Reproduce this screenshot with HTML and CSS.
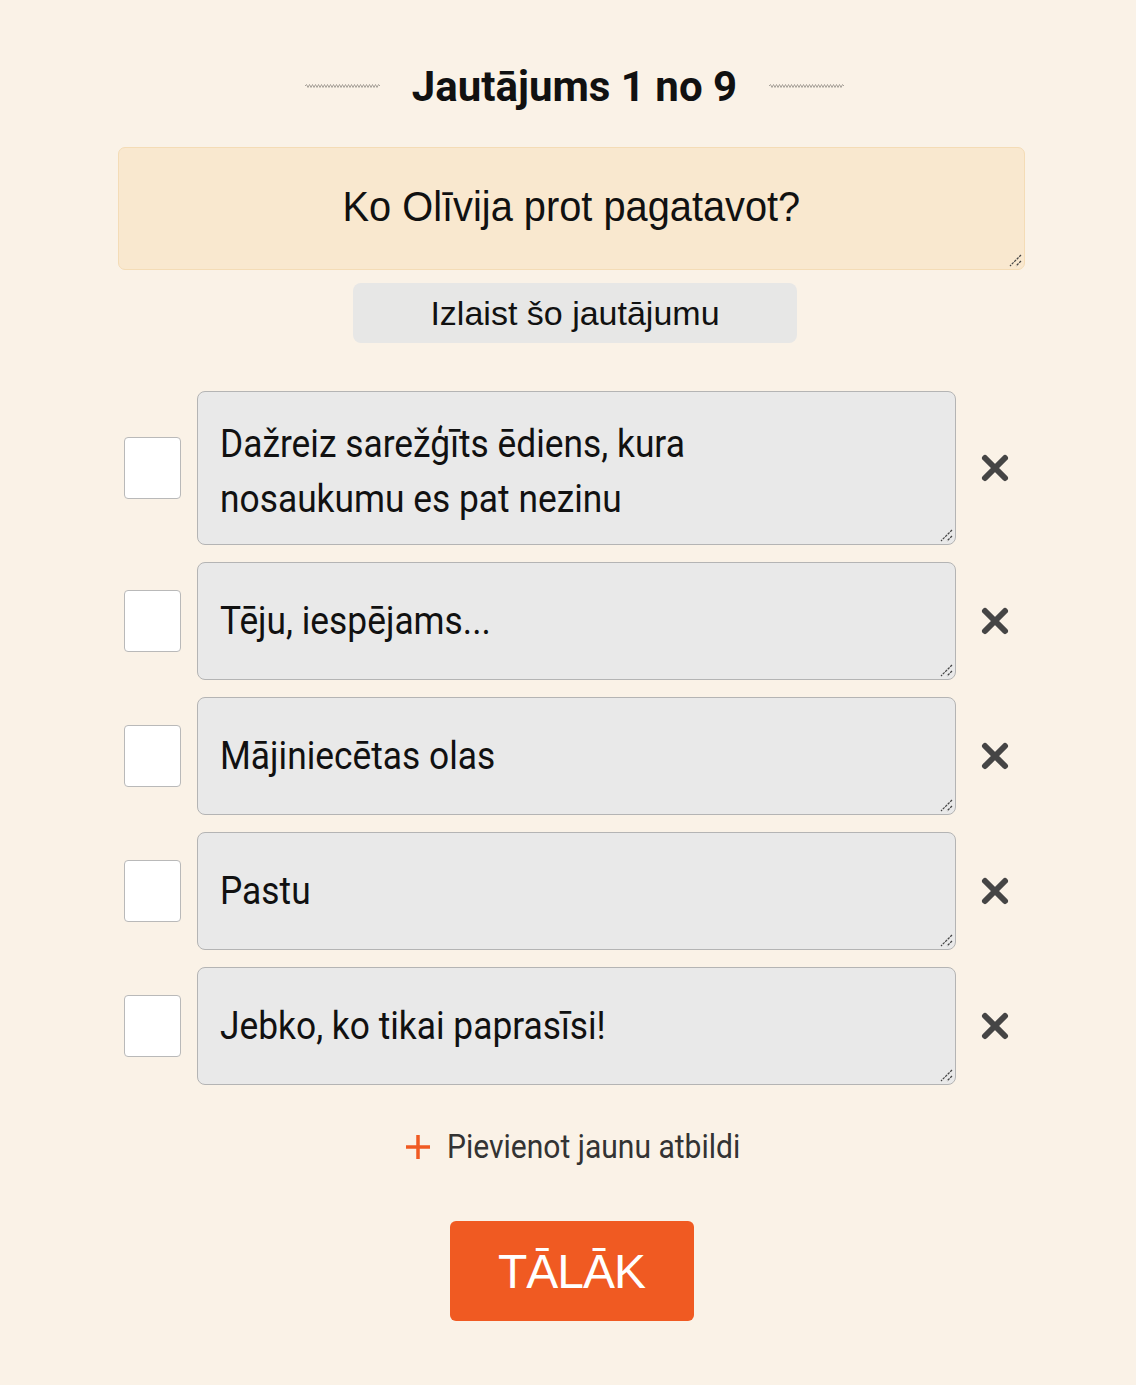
FILE: index.html
```html
<!DOCTYPE html>
<html lang="lv">
<head>
<meta charset="utf-8">
<title>Jautājums 1 no 9</title>
<link rel="stylesheet" href="styles.css">
</head>
<body>
<main class="page">
  <header class="title-row">
    <svg class="wave" width="75" height="6" viewBox="0 0 75 6"><polyline points="0,3 1.5,1.5 3,4.5 4.5,1.5 6,4.5 7.5,1.5 9,4.5 10.5,1.5 12,4.5 13.5,1.5 15,4.5 16.5,1.5 18,4.5 19.5,1.5 21,4.5 22.5,1.5 24,4.5 25.5,1.5 27,4.5 28.5,1.5 30,4.5 31.5,1.5 33,4.5 34.5,1.5 36,4.5 37.5,1.5 39,4.5 40.5,1.5 42,4.5 43.5,1.5 45,4.5 46.5,1.5 48,4.5 49.5,1.5 51,4.5 52.5,1.5 54,4.5 55.5,1.5 57,4.5 58.5,1.5 60,4.5 61.5,1.5 63,4.5 64.5,1.5 66,4.5 67.5,1.5 69,4.5 70.5,1.5 72,4.5 73.5,1.5 75,3"/></svg>
    <h1 class="title">Jautājums 1 no 9</h1>
    <svg class="wave" width="75" height="6" viewBox="0 0 75 6"><polyline points="0,3 1.5,1.5 3,4.5 4.5,1.5 6,4.5 7.5,1.5 9,4.5 10.5,1.5 12,4.5 13.5,1.5 15,4.5 16.5,1.5 18,4.5 19.5,1.5 21,4.5 22.5,1.5 24,4.5 25.5,1.5 27,4.5 28.5,1.5 30,4.5 31.5,1.5 33,4.5 34.5,1.5 36,4.5 37.5,1.5 39,4.5 40.5,1.5 42,4.5 43.5,1.5 45,4.5 46.5,1.5 48,4.5 49.5,1.5 51,4.5 52.5,1.5 54,4.5 55.5,1.5 57,4.5 58.5,1.5 60,4.5 61.5,1.5 63,4.5 64.5,1.5 66,4.5 67.5,1.5 69,4.5 70.5,1.5 72,4.5 73.5,1.5 75,3"/></svg>
  </header>

  <div class="question">
    <p class="question-text">Ko Olīvija prot pagatavot?</p>
    <svg class="grip" width="14" height="14" viewBox="0 0 14 14"><path d="M13 2 L2 13 M13 8 L8 13"/></svg>
  </div>

  <div class="skip-wrap"><button class="skip">Izlaist šo jautājumu</button></div>

  <ul class="answers">
    <li class="answer">
      <span class="check"></span>
      <div class="answer-box answer-box-multi"><span class="answer-text">Dažreiz sarežģīts ēdiens, kura<br>nosaukumu es pat nezinu</span>
        <svg class="grip" width="14" height="14" viewBox="0 0 14 14"><path d="M13 2 L2 13 M13 8 L8 13"/></svg></div>
      <svg class="remove" width="30" height="30" viewBox="0 0 30 30"><path d="M5 5 L25 25 M25 5 L5 25"/></svg>
    </li>
    <li class="answer">
      <span class="check"></span>
      <div class="answer-box"><span class="answer-text">Tēju, iespējams...</span>
        <svg class="grip" width="14" height="14" viewBox="0 0 14 14"><path d="M13 2 L2 13 M13 8 L8 13"/></svg></div>
      <svg class="remove" width="30" height="30" viewBox="0 0 30 30"><path d="M5 5 L25 25 M25 5 L5 25"/></svg>
    </li>
    <li class="answer">
      <span class="check"></span>
      <div class="answer-box"><span class="answer-text">Mājiniecētas olas</span>
        <svg class="grip" width="14" height="14" viewBox="0 0 14 14"><path d="M13 2 L2 13 M13 8 L8 13"/></svg></div>
      <svg class="remove" width="30" height="30" viewBox="0 0 30 30"><path d="M5 5 L25 25 M25 5 L5 25"/></svg>
    </li>
    <li class="answer">
      <span class="check"></span>
      <div class="answer-box"><span class="answer-text">Pastu</span>
        <svg class="grip" width="14" height="14" viewBox="0 0 14 14"><path d="M13 2 L2 13 M13 8 L8 13"/></svg></div>
      <svg class="remove" width="30" height="30" viewBox="0 0 30 30"><path d="M5 5 L25 25 M25 5 L5 25"/></svg>
    </li>
    <li class="answer">
      <span class="check"></span>
      <div class="answer-box"><span class="answer-text">Jebko, ko tikai paprasīsi!</span>
        <svg class="grip" width="14" height="14" viewBox="0 0 14 14"><path d="M13 2 L2 13 M13 8 L8 13"/></svg></div>
      <svg class="remove" width="30" height="30" viewBox="0 0 30 30"><path d="M5 5 L25 25 M25 5 L5 25"/></svg>
    </li>
  </ul>

  <div class="add-wrap">
    <button class="add"><svg class="plus" width="26" height="26" viewBox="0 0 26 26"><path d="M13 1 V25 M1 13 H25"/></svg><span class="add-text">Pievienot jaunu atbildi</span></button>
  </div>

  <div class="next-wrap"><button class="next">TĀLĀK</button></div>
</main>
</body>
</html>
```

FILE: styles.css
```css
* { box-sizing: border-box; }

html, body {
  margin: 0;
  padding: 0;
  background: #faf2e7;
  font-family: "Liberation Sans", Arial, sans-serif;
  color: #111;
}

.page {
  width: 907px;
  margin-left: 118px;
  padding-top: 58px;
  padding-bottom: 64px;
}

.title-row {
  display: flex;
  align-items: center;
  justify-content: center;
  gap: 32px;
  height: 58px;
  padding-left: 6px;
}

.wave {
  display: block;
  margin-top: -2px;
}
.wave polyline {
  fill: none;
  stroke: #a8a29a;
  stroke-width: 1;
}

.title {
  margin: 0;
  font-family: Roboto, "Liberation Sans", sans-serif;
  font-weight: 700;
  font-size: 42px;
  line-height: 58px;
  color: #111;
}

.question {
  position: relative;
  margin-top: 31px;
  height: 123px;
  background: #f9e8cf;
  border: 1.5px solid #f4dcb6;
  border-radius: 7px;
  display: flex;
  align-items: center;
  justify-content: center;
}

.question-text {
  margin: -6px 0 0;
  font-size: 43px;
  line-height: 50px;
  color: #111;
  transform: scaleX(0.925);
}

.grip {
  position: absolute;
  right: 2px;
  bottom: 2px;
}
.grip path {
  fill: none;
  stroke: #444;
  stroke-width: 1.2;
  stroke-dasharray: 2.5 1;
}

.skip-wrap {
  display: flex;
  justify-content: center;
  margin-top: 13px;
}
.skip {
  width: 444px;
  height: 60px;
  border: none;
  border-radius: 8px;
  background: #e7e7e6;
  font-family: "Liberation Sans", Arial, sans-serif;
  font-size: 34px;
  color: #111;
  padding: 0;
  margin-left: 7px;
}

.answers {
  list-style: none;
  margin: 48px 0 0;
  padding: 0 0 0 6px;
  display: flex;
  flex-direction: column;
  gap: 17px;
}

.answer {
  display: grid;
  grid-template-columns: 57px 759px 30px;
  column-gap: 16px;
  align-items: center;
}
.answer .remove { margin-left: 8px; }

.check {
  display: block;
  width: 57px;
  height: 62px;
  background: #fff;
  border: 1.5px solid #b9b9b9;
  border-radius: 4px;
}

.answer-box {
  position: relative;
  min-height: 118px;
  padding: 21px 22px;
  display: flex;
  align-items: center;
  background: #e9e9e9;
  border: 1.5px solid #b4b4b4;
  border-radius: 8px;
}
.answer-box-multi {
  padding-top: 25px;
  padding-bottom: 17px;
}

.answer-text {
  display: inline-block;
  font-family: Roboto, "Liberation Sans", sans-serif;
  font-size: 38px;
  line-height: 55px;
  color: #111;
  transform: scaleX(0.93);
  transform-origin: left center;
}

.remove path {
  fill: none;
  stroke: #454545;
  stroke-width: 6;
  stroke-linecap: round;
}

.add-wrap {
  display: flex;
  justify-content: center;
  margin-top: 42px;
}
.add {
  display: flex;
  align-items: center;
  gap: 16px;
  background: none;
  border: none;
  padding: 0;
  font-family: Roboto, "Liberation Sans", sans-serif;
  font-size: 33px;
  color: #333;
  margin-left: 0;
}
.add-text {
  display: inline-block;
  width: 292px;
  white-space: nowrap;
  transform: scaleX(0.91);
  transform-origin: left center;
}
.plus path {
  fill: none;
  stroke: #f05a22;
  stroke-width: 3.5;
}

.next-wrap {
  display: flex;
  justify-content: center;
  margin-top: 55px;
}
.next {
  width: 244px;
  height: 100px;
  border: none;
  border-radius: 6px;
  background: #f05a22;
  color: #fff;
  font-family: "Liberation Sans", Arial, sans-serif;
  font-size: 48px;
  letter-spacing: -1px;
  padding: 0;
}
```
